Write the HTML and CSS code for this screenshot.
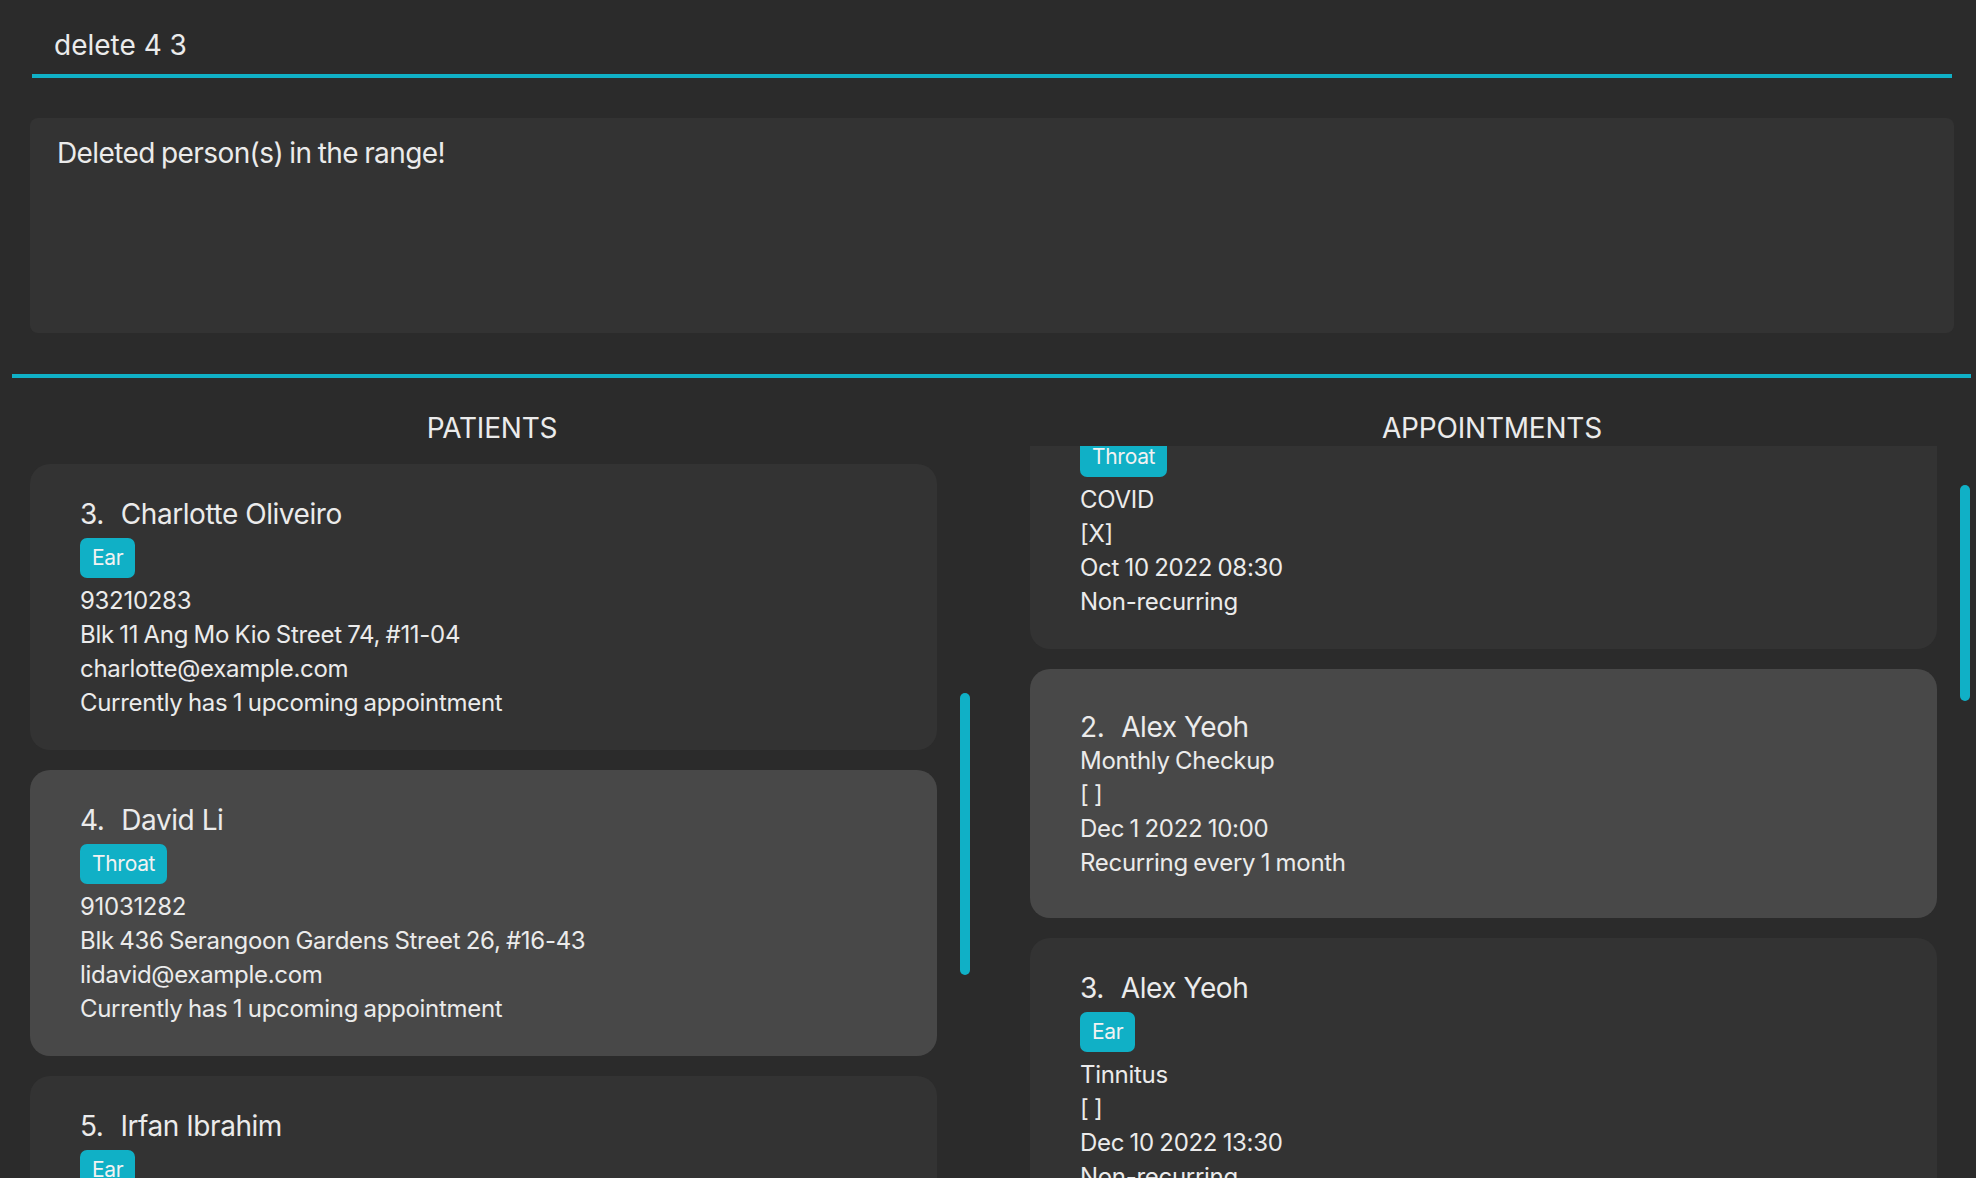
FILE: index.html
```html
<!DOCTYPE html>
<html>
<head>
<meta charset="utf-8">
<link rel="stylesheet" href="styles.css">
</head>
<body>
<div class="command">delete 4 3</div>
<div class="result">Deleted person(s) in the range!</div>
<div class="separator"></div>
<main class="panels">
  <section class="panel">
    <h2 class="panel-title">PATIENTS</h2>
    <div class="viewport">
      <div class="list">
        <div class="card">
          <div class="title"><span class="idx">3.</span><span>Charlotte Oliveiro</span></div>
          <div class="tags"><span class="tag">Ear</span></div>
          <div class="line">93210283</div>
          <div class="line">Blk 11 Ang Mo Kio Street 74, #11-04</div>
          <div class="line">charlotte@example.com</div>
          <div class="line">Currently has 1 upcoming appointment</div>
        </div>
        <div class="card selected">
          <div class="title"><span class="idx">4.</span><span>David Li</span></div>
          <div class="tags"><span class="tag">Throat</span></div>
          <div class="line">91031282</div>
          <div class="line">Blk 436 Serangoon Gardens Street 26, #16-43</div>
          <div class="line">lidavid@example.com</div>
          <div class="line">Currently has 1 upcoming appointment</div>
        </div>
        <div class="card">
          <div class="title"><span class="idx">5.</span><span>Irfan Ibrahim</span></div>
          <div class="tags"><span class="tag">Ear</span></div>
          <div class="line">92492021</div>
          <div class="line">Blk 47 Tampines Street 20, #17-35</div>
          <div class="line">irfan@example.com</div>
          <div class="line">Currently has 0 upcoming appointments</div>
        </div>
      </div>
      <div class="track"><div class="thumb thumb-patients"></div></div>
    </div>
  </section>
  <section class="panel">
    <h2 class="panel-title">APPOINTMENTS</h2>
    <div class="viewport">
      <div class="list list-scrolled">
        <div class="card">
          <div class="title"><span class="idx">1.</span><span>David Li</span></div>
          <div class="tags"><span class="tag">Throat</span></div>
          <div class="line">COVID</div>
          <div class="line">[X]</div>
          <div class="line">Oct 10 2022 08:30</div>
          <div class="line">Non-recurring</div>
        </div>
        <div class="card selected">
          <div class="title"><span class="idx">2.</span><span>Alex Yeoh</span></div>
          <div class="line">Monthly Checkup</div>
          <div class="line">[ ]</div>
          <div class="line">Dec 1 2022 10:00</div>
          <div class="line">Recurring every 1 month</div>
        </div>
        <div class="card">
          <div class="title"><span class="idx">3.</span><span>Alex Yeoh</span></div>
          <div class="tags"><span class="tag">Ear</span></div>
          <div class="line">Tinnitus</div>
          <div class="line">[ ]</div>
          <div class="line">Dec 10 2022 13:30</div>
          <div class="line">Non-recurring</div>
        </div>
      </div>
      <div class="track"><div class="thumb thumb-appts"></div></div>
    </div>
  </section>
</main>
</body>
</html>
```
FILE: styles.css
```css
* { box-sizing: border-box; }
html, body { margin: 0; padding: 0; }
body {
  width: 1976px;
  height: 1178px;
  overflow: hidden;
  background: #2b2b2b;
  color: #ebebeb;
  font-family: "Inter", "Noto Sans", sans-serif;
}
.command {
  margin: 0 24px 0 32px;
  padding: 28px 0 12px 22px;
  font-size: 28px;
  line-height: 34px;
  border-bottom: 4px solid #10b0c6;
}
.result {
  margin: 40px 22px 0 30px;
  height: 215px;
  padding: 18px 27px;
  background: #333333;
  border-radius: 8px;
  font-size: 28px;
  line-height: 34px;
  letter-spacing: -0.6px;
  word-spacing: -1px;
}
.separator {
  margin: 41px 5px 0 12px;
  height: 4px;
  background: #10b0c6;
}
.panels {
  display: grid;
  grid-template-columns: 960px 960px;
  column-gap: 40px;
  padding-left: 12px;
}
.panel { display: flex; flex-direction: column; }
.panel-title {
  margin: 33px 0 0;
  font-weight: 400;
  font-size: 28px;
  line-height: 34px;
  text-align: center;
  letter-spacing: -0.2px;
}
.viewport {
  margin-top: 1px;
  height: 732px;
  display: flex;
  overflow: hidden;
}
.list {
  width: 925px;
  padding: 18px 0 0 18px;
  display: flex;
  flex-direction: column;
  gap: 20px;
}
.list-scrolled { margin-top: -101px; }
.card {
  flex: none;
  min-height: 249px;
  padding: 33px 20px 30px 50px;
  background: #333333;
  border-radius: 20px;
  display: flex;
  flex-direction: column;
  justify-content: center;
}
.card.selected { background: #484848; }
.title {
  font-size: 28px;
  line-height: 34px;
  display: flex;
  letter-spacing: -0.45px;
}
.idx { margin-right: 17px; }
.tags {
  display: flex;
  gap: 8px;
  margin: 7px 0 6px;
}
.tag {
  display: inline-block;
  height: 40px;
  line-height: 40px;
  padding: 0 12px;
  font-size: 21px;
  letter-spacing: -0.3px;
  background: #10b0c6;
  color: #f2f2f2;
  border-radius: 7px;
}
.line {
  font-size: 24px;
  line-height: 34px;
  white-space: nowrap;
  letter-spacing: -0.3px;
  word-spacing: -1px;
}
.track {
  width: 35px;
  flex: none;
  padding-left: 23px;
}
.thumb {
  width: 10px;
  background: #10b0c6;
  border-radius: 5px;
}
.thumb-patients { margin-top: 247px; height: 282px; }
.thumb-appts { margin-top: 39px; height: 216px; }
```
